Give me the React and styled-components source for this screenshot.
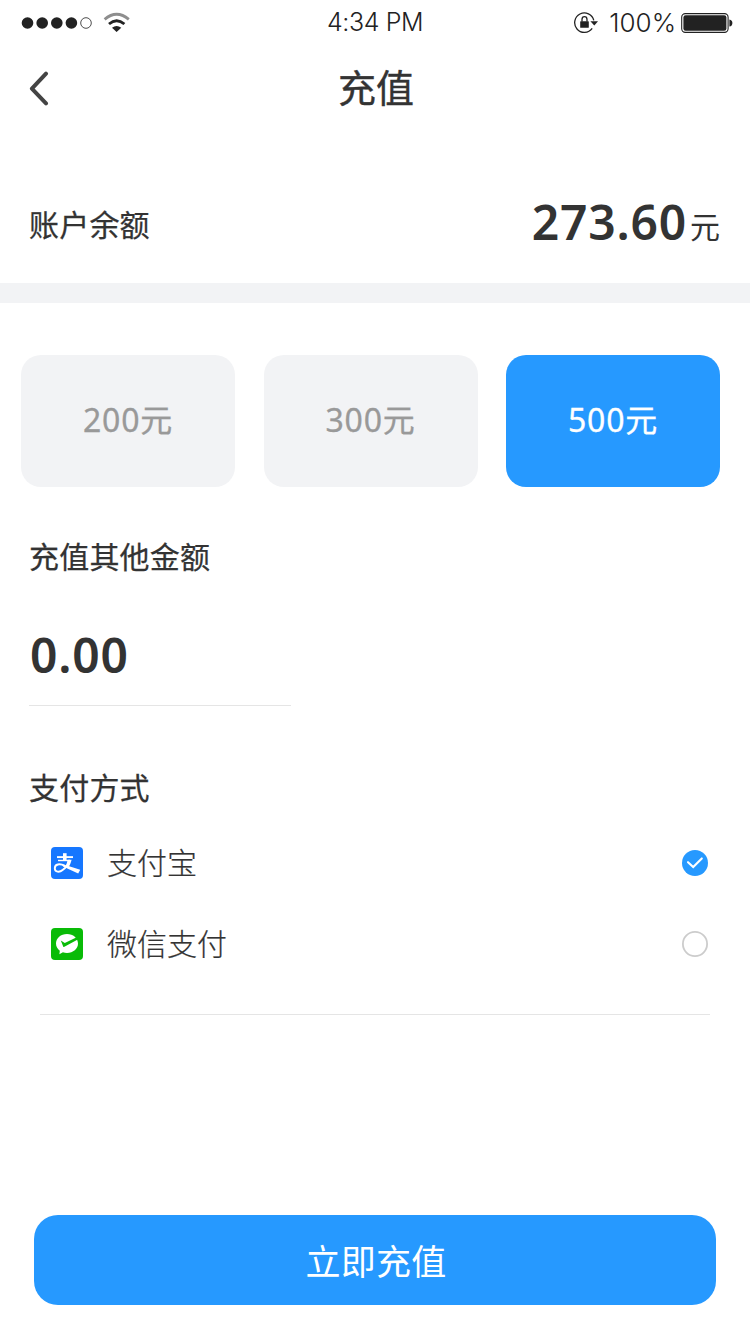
import React, { useState } from 'react'
import styled, { createGlobalStyle } from 'styled-components'

const GlobalStyle = createGlobalStyle`
  * {
    box-sizing: border-box;
    margin: 0;
    padding: 0;
  }

  body {
    background: #fff;
    color: #333;
    font-family: "Noto Sans", "Noto Sans CJK SC", sans-serif;
  }

  button {
    border: none;
    background: none;
    font-family: inherit;
    cursor: pointer;
  }
`

const Page = styled.main`
  display: flex;
  flex-direction: column;
  width: 750px;
  height: 1334px;
  background: #fff;
  overflow: hidden;
`

const StatusBar = styled.div`
  display: grid;
  grid-template-columns: 1fr auto 1fr;
  align-items: center;
  height: 45px;
  padding: 0 17px;
  color: #222;
  font-family: "Inter", "Liberation Sans", sans-serif;
  font-weight: 300;
  line-height: 44px;
`

const StatusSide = styled.div`
  display: flex;
  align-items: center;
  justify-content: ${({ $end }) => ($end ? 'flex-end' : 'flex-start')};
  padding-left: 4px;
`

const Time = styled.span`
  margin-top: -1px;
  font-size: 25px;
  letter-spacing: -0.4px;
`

const Percent = styled.span`
  margin: 0 5px 0 10px;
  font-size: 26px;
`

const NavBar = styled.header`
  display: grid;
  grid-template-columns: 60px 1fr 60px;
  align-items: center;
  height: 88px;
  padding: 0 20px;
`

const BackButton = styled.button`
  display: flex;
  justify-content: flex-start;
  padding-left: 8px;
`

const Title = styled.h1`
  padding: 0 0 6px 2px;
  font-family: "Noto Sans CJK SC", sans-serif;
  font-weight: 400;
  font-size: 38px;
  line-height: 56px;
  text-align: center;
  -webkit-text-stroke: 0.4px;
`

const Balance = styled.section`
  display: flex;
  justify-content: space-between;
  align-items: flex-start;
  height: 150px;
  padding: 54px 30px 0 29px;
`

const Label = styled.h2`
  padding-bottom: 4px;
  font-family: "Noto Sans CJK SC", sans-serif;
  font-weight: 400;
  font-size: 30px;
  line-height: 40px;
  letter-spacing: 0.2px;
  -webkit-text-stroke: 0.25px;

  ${Balance} & {
    margin-top: 16px;
  }
`

const Amount = styled.div`
  font-weight: 600;
  font-size: 48px;
  line-height: 70px;
  letter-spacing: 0.8px;
`

const Unit = styled.span`
  margin-left: 3px;
  font-family: "Noto Sans CJK SC", sans-serif;
  font-weight: 400;
  font-size: 30px;
  line-height: 1;
  letter-spacing: 0;
  vertical-align: 2px;
`

const Band = styled.div`
  height: 20px;
  background: #f2f3f5;
`

const Presets = styled.div`
  display: grid;
  grid-template-columns: repeat(3, 214px);
  justify-content: space-between;
  padding: 52px 30px 0 21px;
`

const Preset = styled.button`
  height: 132px;
  padding-bottom: 2px;
  border-radius: 20px;
  background: ${({ $active }) => ($active ? '#2699ff' : '#f2f3f5')};
  color: ${({ $active }) => ($active ? '#fff' : '#999')};
  font-weight: 400;
  font-size: 32px;
  line-height: 130px;
  letter-spacing: 0.8px;
  -webkit-text-stroke: 0.3px;
`

const Custom = styled.section`
  padding: 48px 29px 0;
`

const CustomValue = styled.div`
  width: 262px;
  margin-top: 41px;
  padding-bottom: 15px;
  border-bottom: 1px solid #e5e5e5;

  ${Amount} {
    padding-left: 1px;
  }
`

const Methods = styled.section`
  padding: 60px 29px 0;
`

const MethodList = styled.div`
  margin: 12px 11px 0;
  padding-bottom: 30px;
  border-bottom: 1px solid #e5e5e5;
`

const Method = styled.button`
  display: flex;
  align-items: center;
  width: 100%;
  height: 81px;
  padding: 0 1px 0 11px;
  color: #333;
`

const MethodName = styled.span`
  flex: 1;
  margin-left: 24px;
  padding-bottom: 3px;
  font-family: "Noto Sans CJK SC", sans-serif;
  font-weight: 300;
  font-size: 30px;
  line-height: 44px;
  text-align: left;
  -webkit-text-stroke: 0.2px;
`

const Submit = styled.button`
  height: 90px;
  margin: auto 34px 29px;
  padding: 0 0 1px 2px;
  border-radius: 24px;
  background: #2699ff;
  color: #fff;
  font-family: "Noto Sans CJK SC", sans-serif;
  font-size: 35px;
  line-height: 89px;
  letter-spacing: 0.2px;
`

const Signal = () => (
  <svg width="110" height="22" viewBox="21 12 110 22" fill="#222">
    <circle cx="27.5" cy="23" r="5.8" />
    <circle cx="42.2" cy="23" r="5.8" />
    <circle cx="56.8" cy="23" r="5.8" />
    <circle cx="71.4" cy="23" r="5.8" />
    <circle cx="86" cy="23" r="5.3" fill="none" stroke="#222" strokeWidth="0.8" />
    <path d="M104.6 19.4 Q116.6 9.2 128.8 19.4" fill="none" stroke="#8e8e8e" strokeWidth="2.8" />
    <path d="M109 24 Q116.6 17.4 124.4 24" fill="none" stroke="#222" strokeWidth="2.8" />
    <path d="M112 27.8 Q116.6 24.4 121.3 27.8 L116.6 32 Z" />
  </svg>
)

const RotationLock = () => (
  <svg width="26" height="22" viewBox="573 12 26 22">
    <path d="M593.8 20.4 A9.7 9.7 0 1 0 592.2 28.4" fill="none" stroke="#222" strokeWidth="1.3" />
    <path d="M590.4 21.2 H598 L594.3 25.4 Z" fill="#222" />
    <rect x="580.2" y="21.2" width="8.6" height="6.6" rx="0.6" fill="#222" />
    <path d="M582 21.5 V19.4 A2.5 2.7 0 0 1 587 19.4 V21.5" fill="none" stroke="#222" strokeWidth="1.3" />
  </svg>
)

const Battery = () => (
  <svg width="52" height="22" viewBox="681 12 52 22">
    <rect x="681.7" y="13.6" width="46.4" height="18.8" rx="3.6" fill="none" stroke="#222" strokeWidth="1.1" />
    <rect x="683.4" y="15.2" width="43" height="15.6" rx="2.2" fill="#222" />
    <path d="M729.4 19.4 Q732.4 20 732.4 23 Q732.4 26 729.4 26.6 Z" fill="#222" />
  </svg>
)

const BackIcon = () => (
  <svg width="22" height="36" viewBox="0 0 22 36" fill="none" stroke="#444" strokeWidth="4" strokeLinecap="round" strokeLinejoin="round">
    <path d="M18 2.6 L3.9 17.6 L18 32.4" />
  </svg>
)

const AlipayIcon = () => (
  <svg width="32" height="32" viewBox="0 0 32 32">
    <rect width="32" height="32" rx="4" fill="#1677ff" />
    <g fill="none" stroke="#fff">
      <path d="M6 10.1 H22" strokeWidth="1.9" />
      <path d="M13.8 6.2 V13.5" strokeWidth="3.6" />
      <path d="M7 13.5 H19" strokeWidth="1.4" />
      <path d="M18.9 13 C17.5 17.8 14.4 21 11.6 23 C8.6 25.6 3.8 25.4 3.8 21.3 C3.8 17 8.6 16.2 14 18.8" strokeWidth="1.9" />
    </g>
    <path d="M16.6 12.8 H20.6 C20 15.4 19.2 17.4 18.2 19.2 L29.2 22.8 L27.2 26.6 L16.3 21.6 C15.2 20.8 13.4 20.2 12 19.6 L11 17.2 L15 18.3 C15.8 16.8 16.3 15 16.6 12.8 Z" fill="#fff" />
  </svg>
)

const WechatPayIcon = () => (
  <svg width="32" height="32" viewBox="0 0 32 32">
    <rect width="32" height="32" rx="4" fill="#09bb07" />
    <path d="M16 6 C22.2 6 27 10.2 27 15.6 C27 21 22.2 25 16 25 C14.5 25 13.1 24.8 11.9 24.3 L8.4 26.3 L8.8 22.8 C6.5 21.1 5 18.6 5 15.6 C5 10.2 9.8 6 16 6 Z" fill="#fff" />
    <path d="M9.8 12.6 L13.8 15 L25.2 9.4 L26.8 11.4 L13.4 18.8 Q12.6 19.2 12.2 18.4 Z" fill="#09bb07" />
  </svg>
)

const Radio = ({ checked }) => (
  <svg width="28" height="28" viewBox="0 0 28 28" fill="none">
    {checked ? (
      <>
        <circle cx="14" cy="14" r="13" fill="#2699ff" />
        <path d="M7 13.2 L12.2 18 L20.8 9.4" stroke="#fff" strokeWidth="2.1" strokeLinecap="round" />
      </>
    ) : (
      <circle cx="14" cy="14" r="12.1" stroke="#ccc" strokeWidth="1.8" />
    )}
  </svg>
)

const presets = [200, 300, 500]

const methods = [
  { id: 'alipay', name: '支付宝', Icon: AlipayIcon },
  { id: 'wechat', name: '微信支付', Icon: WechatPayIcon },
]

const App = () => {
  const [preset, setPreset] = useState(500)
  const [method, setMethod] = useState('alipay')

  return (
    <Page>
      <GlobalStyle />
      <StatusBar>
        <StatusSide>
          <Signal />
        </StatusSide>
        <Time>4:34 PM</Time>
        <StatusSide $end>
          <RotationLock />
          <Percent>100%</Percent>
          <Battery />
        </StatusSide>
      </StatusBar>

      <NavBar>
        <BackButton aria-label="返回">
          <BackIcon />
        </BackButton>
        <Title>充值</Title>
      </NavBar>

      <Balance>
        <Label>账户余额</Label>
        <Amount>
          273.60<Unit>元</Unit>
        </Amount>
      </Balance>
      <Band />

      <Presets>
        {presets.map((value) => (
          <Preset key={value} $active={value === preset} onClick={() => setPreset(value)}>
            {value}元
          </Preset>
        ))}
      </Presets>

      <Custom>
        <Label>充值其他金额</Label>
        <CustomValue>
          <Amount>0.00</Amount>
        </CustomValue>
      </Custom>

      <Methods>
        <Label>支付方式</Label>
        <MethodList>
          {methods.map(({ id, name, Icon }) => (
            <Method key={id} onClick={() => setMethod(id)}>
              <Icon />
              <MethodName>{name}</MethodName>
              <Radio checked={id === method} />
            </Method>
          ))}
        </MethodList>
      </Methods>

      <Submit>立即充值</Submit>
    </Page>
  )
}

export default App
